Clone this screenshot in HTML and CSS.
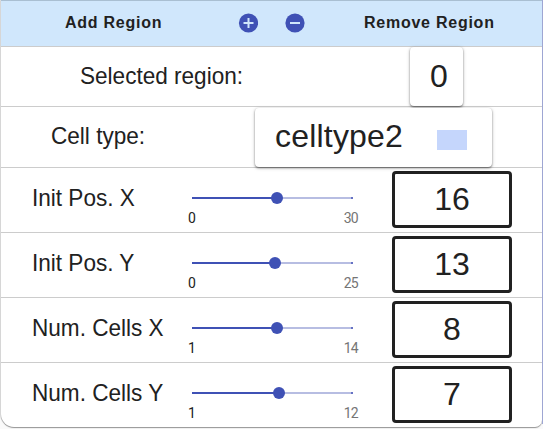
FILE: index.html
```html
<!DOCTYPE html>
<html lang="en">
<head>
<meta charset="utf-8">
<title>Regions</title>
<link rel="stylesheet" href="styles.css">
</head>
<body>
<main class="card">
  <header class="head">
    <span class="add">Add Region</span>
    <svg class="icon" viewBox="0 0 20 20"><circle cx="10.5" cy="10" r="9.6" fill="#3f51b5"/><path d="M5.5 10h10M10.5 5v10" stroke="#d0e6fb" stroke-width="2"/></svg>
    <svg class="icon second" viewBox="0 0 20 20"><circle cx="10" cy="10" r="9.6" fill="#3f51b5"/><path d="M5 10h10" stroke="#d0e6fb" stroke-width="2"/></svg>
    <span class="remove">Remove Region</span>
  </header>
  <section class="row region"><span class="label">Selected region:</span><div class="select num">0</div></section>
  <section class="row type"><span class="label">Cell type:</span><div class="select celltype"><span>celltype2</span><i class="swatch"></i></div></section>
  <section class="row param"><span class="label">Init Pos. X</span>
    <div class="slider"><div class="rail"><div class="track" style="width:53.3%"></div><i class="thumb"></i></div><div class="marks"><span>0</span><span class="max">30</span></div></div>
    <div class="value">16</div></section>
  <section class="row param"><span class="label">Init Pos. Y</span>
    <div class="slider"><div class="rail"><div class="track" style="width:52%"></div><i class="thumb"></i></div><div class="marks"><span>0</span><span class="max">25</span></div></div>
    <div class="value">13</div></section>
  <section class="row param"><span class="label">Num. Cells X</span>
    <div class="slider"><div class="rail"><div class="track" style="width:53.3%"></div><i class="thumb"></i></div><div class="marks"><span>1</span><span class="max">14</span></div></div>
    <div class="value">8</div></section>
  <section class="row param"><span class="label">Num. Cells Y</span>
    <div class="slider"><div class="rail"><div class="track" style="width:54.5%"></div><i class="thumb"></i></div><div class="marks"><span>1</span><span class="max">12</span></div></div>
    <div class="value">7</div></section>
</main>
</body>
</html>
```
FILE: styles.css
```css
* { box-sizing: border-box; }
body {
  margin: 0;
  height: 429px;
  overflow: hidden;
  background: linear-gradient(#9fa8da, #9fa8da) right top / 1px 424px no-repeat, #fafafa;
  font-family: "Liberation Sans", Arial, sans-serif;
  color: #212121;
}
.card {
  width: 541px;
  height: 427px;
  margin-left: 1px;
  background: #fff;
  border-radius: 0 0 7px 13px;
  box-shadow: 0 1px 1px #949494, -1px 0 0 #ddd;
}
.head {
  display: flex;
  align-items: center;
  height: 47px;
  padding: 0 0 2px 64px;
  background: #d0e7fc;
  border-top: 1px solid #a9bfd2;
  border-bottom: 1px solid #ccc;
  font-size: 16px;
  font-weight: bold;
}
.head span { letter-spacing: .75px; white-space: nowrap; }
.add { width: 173px; }
.icon { width: 20px; height: 20px; flex: none; }
.second { margin-left: 27px; }
.remove { margin-left: 59px; }
.row {
  display: flex;
  align-items: center;
  height: 65px;
  border-bottom: 1px solid #ccc;
}
.row:last-child { border-bottom-color: transparent; }
.label {
  flex: none;
  font-size: 24px;
  line-height: 28px;
  white-space: nowrap;
  transform: scaleX(.94);
  transform-origin: left;
}
.region { height: 60px; padding-left: 79px; }
.region .label { width: 330px; margin-top: -2px; }
.type { height: 61px; padding-left: 50px; }
.type .label { width: 204px; margin-top: -2px; }
.select {
  position: relative;
  display: flex;
  align-items: center;
  height: 59px;
  background: #fff;
  border-radius: 4px;
  box-shadow: 0 1px 2px rgba(0,0,0,.5), 0 1px 4px rgba(0,0,0,.16);
  font-size: 32px;
}
.num { width: 53px; padding-left: 20px; }
.celltype { width: 237px; padding: 0 25px 2px 20px; justify-content: space-between; letter-spacing: .2px; }
.swatch { width: 30px; height: 20px; margin-top: 8px; background: #c5d6fc; }
.param { padding-left: 30.5px; }
.param .label { width: 160.5px; margin-top: -5px; }
.slider { width: 161px; height: 64px; padding-top: 29px; }
.rail {
  display: flex;
  align-items: center;
  height: 2px;
  background: #b7bde2;
  border-right: 2px solid #6572c4;
}
.track { height: 2px; background: #3f51b5; }
.thumb {
  flex: none;
  width: 12px;
  height: 12px;
  margin-left: -6px;
  border-radius: 50%;
  background: #3f51b5;
}
.marks {
  display: flex;
  justify-content: space-between;
  margin: 11px -5px 0 -4px;
  font: 14px/17px Roboto, sans-serif;
  letter-spacing: -.7px;
}
.max { color: #757575; }
.value {
  width: 120px;
  height: 57px;
  margin: -2px 0 0 39px;
  border: 3px solid #212121;
  border-radius: 4px;
  font-size: 32px;
  line-height: 50px;
  text-align: center;
}
```
